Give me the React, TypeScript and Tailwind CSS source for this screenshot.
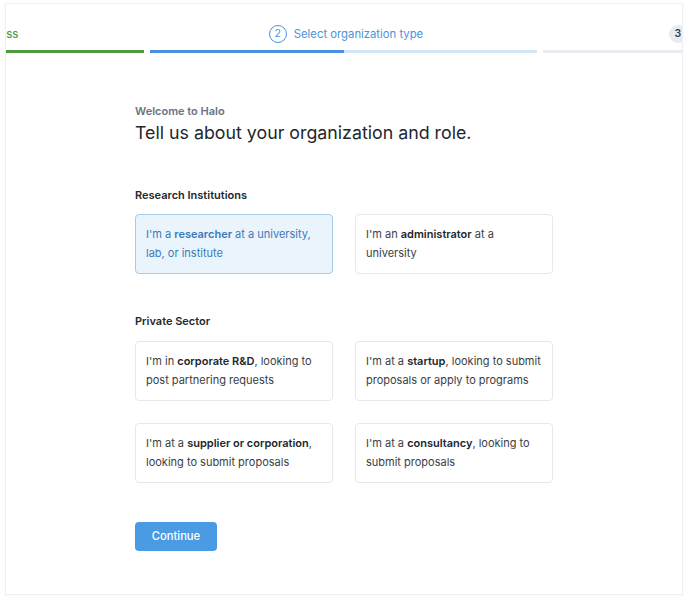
import { Check } from "lucide-react";

const steps = [
  { n: 1, label: "Verify your address", state: "done" },
  { n: 2, label: "Select organization type", state: "active" },
  { n: 3, label: "Complete your profile", state: "todo" },
];

function StepHeader() {
  return (
    <div className="overflow-hidden">
      <div className="flex gap-[6px] ml-[-249px] w-[1200px]">
        {steps.map((s) => (
          <div key={s.n} className="w-[387px] shrink-0">
            <div className="h-[46px] pt-[14px] pl-[5px] flex items-center justify-center gap-[7px]">
              {s.state === "done" && (
                <>
                  <span className="w-[18px] h-[18px] rounded-full border border-[#4f9a3f] flex items-center justify-center text-[#4f9a3f]">
                    <Check size={11} strokeWidth={2.5} />
                  </span>
                  <span className="text-[11.3px] font-medium text-[#4f9a3f]">{s.label}</span>
                </>
              )}
              {s.state === "active" && (
                <>
                  <span className="w-[18px] h-[18px] rounded-full border border-[#4a93dc] flex items-center justify-center text-[10.5px] text-[#4a93dc]">
                    {s.n}
                  </span>
                  <span className="text-[11.3px] text-[#4a93dc]">{s.label}</span>
                </>
              )}
              {s.state === "todo" && (
                <>
                  <span className="w-[18px] h-[18px] rounded-full bg-[#e8ebef] flex items-center justify-center text-[10.5px] font-semibold text-gray-700">
                    {s.n}
                  </span>
                  <span className="text-[11.3px] text-gray-400">{s.label}</span>
                </>
              )}
            </div>
            {s.state === "done" && <div className="h-[3px] bg-[#4f9a3f]" />}
            {s.state === "active" && (
              <div className="h-[3px] bg-[#d3e6f8] flex">
                <div className="w-1/2 bg-[#4a93dc]" />
              </div>
            )}
            {s.state === "todo" && <div className="h-[3px] bg-[#e8ebef]" />}
          </div>
        ))}
      </div>
    </div>
  );
}

function OptionCard({ children, selected }: { children: React.ReactNode; selected?: boolean }) {
  return (
    <div
      className={
        selected
          ? "w-[198px] h-[60px] pl-[10px] pr-[8px] pt-[10px] rounded-[4px] border border-[#a5cbee] bg-[#eaf4fd] text-[#3a79ba] text-[11px] leading-[19px] cursor-pointer"
          : "w-[198px] h-[60px] pl-[10px] pr-[8px] pt-[10px] rounded-[4px] border border-[#e6e8eb] bg-white text-[#3a3e44] text-[11px] leading-[19px] cursor-pointer"
      }
    >
      {children}
    </div>
  );
}

export default function App() {
  return (
    <div className="bg-white px-[5px] pt-[3px] pb-[8px] font-['Inter',sans-serif]">
      <div className="h-[592px] border border-[#eef1f4] shadow-[0_1px_3px_rgba(0,0,0,0.04)] bg-white">
        <StepHeader />

        <div className="pl-[129px] pt-[50px]">
          <p className="text-[11px] leading-[16px] font-semibold text-gray-500">Welcome to Halo</p>
          <h1 className="text-[17.8px] leading-[24px] text-[#23272d] mt-[2px]">Tell us about your organization and role.</h1>

          <h2 className="mt-[42px] text-[11px] leading-[16px] font-semibold text-[#23272d]">Research Institutions</h2>
          <div className="flex gap-[22px] mt-[11px]">
            <OptionCard selected>
              I'm a <b className="font-semibold">researcher</b> at a university, lab, or institute
            </OptionCard>
            <OptionCard>
              I'm an <b className="font-semibold text-[#23272d]">administrator</b> at a university
            </OptionCard>
          </div>

          <h2 className="mt-[39px] text-[11px] leading-[16px] font-semibold text-[#23272d]">Private Sector</h2>
          <div className="flex gap-[22px] mt-[12px]">
            <OptionCard>
              I'm in <b className="font-semibold text-[#23272d]">corporate R&amp;D</b>, looking to post partnering requests
            </OptionCard>
            <OptionCard>
              I'm at a <b className="font-semibold text-[#23272d]">startup</b>, looking to submit proposals or apply to programs
            </OptionCard>
          </div>
          <div className="flex gap-[22px] mt-[22px]">
            <OptionCard>
              I'm at a <b className="font-semibold text-[#23272d]">supplier or corporation</b>, looking to submit proposals
            </OptionCard>
            <OptionCard>
              I'm at a <b className="font-semibold text-[#23272d]">consultancy</b>, looking to submit proposals
            </OptionCard>
          </div>

          <button className="mt-[39px] w-[82px] h-[29px] rounded-[4px] bg-[#4a9be3] text-white text-[11.2px] font-medium">
            Continue
          </button>
        </div>
      </div>
    </div>
  );
}
